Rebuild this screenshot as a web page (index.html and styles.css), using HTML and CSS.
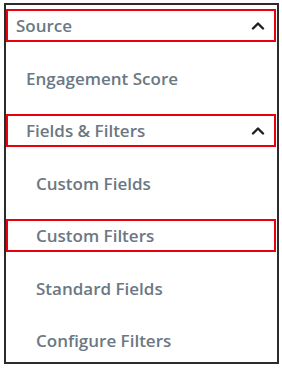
FILE: index.html
```html
<!DOCTYPE html>
<html lang="en">
<head>
    <meta charset="UTF-8">
    <meta name="viewport" content="width=device-width, initial-scale=1.0">
    <title>Source Menu</title>
    <link rel="stylesheet" href="styles.css">
</head>
<body>
    <div class="menu-panel">
        <div class="menu-item level-1 highlighted">
            <span class="label">Source</span>
            <svg class="chevron" width="14" height="9" viewBox="0 0 14 9">
                <polyline points="2,7.5 7,2.5 12,7.5" />
            </svg>
        </div>
        <div class="menu-item level-2">
            <span class="label">Engagement Score</span>
        </div>
        <div class="menu-item level-2 highlighted">
            <span class="label">Fields &amp; Filters</span>
            <svg class="chevron" width="14" height="9" viewBox="0 0 14 9">
                <polyline points="2,7.5 7,2.5 12,7.5" />
            </svg>
        </div>
        <div class="menu-item level-3">
            <span class="label">Custom Fields</span>
        </div>
        <div class="menu-item level-3 highlighted">
            <span class="label">Custom Filters</span>
        </div>
        <div class="menu-item level-3">
            <span class="label">Standard Fields</span>
        </div>
        <div class="menu-item level-3">
            <span class="label">Configure Filters</span>
        </div>
    </div>
</body>
</html>
```

FILE: styles.css
```css
* {
    box-sizing: border-box;
    margin: 0;
    padding: 0;
}

body {
    background-color: white;
    font-family: "Open Sans", "Noto Sans", sans-serif;
}

.menu-panel {
    width: 275px;
    height: 361px;
    margin: 3px 0 0 4px;
    border: 2px solid #2b2b2b;
    padding-top: 4px;
    display: flex;
    flex-direction: column;
    gap: 19.5px;
}

.menu-item {
    height: 33px;
    margin-right: 1px;
    border: 2px solid transparent;
    display: flex;
    align-items: center;
    justify-content: space-between;
    padding-right: 9px;
}

.menu-item.highlighted {
    border-color: #e8000b;
}

.label {
    font-size: 17px;
    font-weight: 600;
    color: #6b7883;
    white-space: nowrap;
}

.level-1 {
    padding-left: 8px;
}

.level-2 {
    padding-left: 18px;
}

.level-3 {
    padding-left: 28px;
}

.chevron polyline {
    fill: none;
    stroke: #1f1f1f;
    stroke-width: 2.4;
    stroke-linecap: round;
    stroke-linejoin: round;
}
```
